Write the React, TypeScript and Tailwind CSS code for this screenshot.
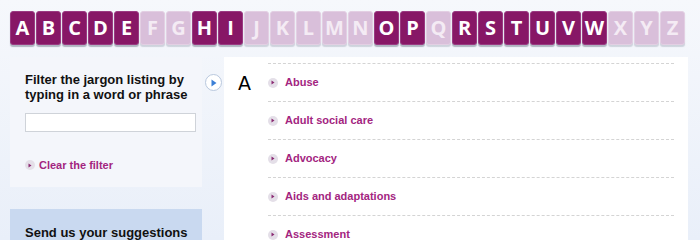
const letters = 'ABCDEFGHIJKLMNOPQRSTUVWXYZ'.split('');
const active = new Set(['A', 'B', 'C', 'D', 'E', 'H', 'I', 'O', 'P', 'R', 'S', 'T', 'U', 'V', 'W']);

const terms = ['Abuse', 'Adult social care', 'Advocacy', 'Aids and adaptations', 'Assessment'];

function Bullet() {
  return (
    <span className="flex h-[10px] w-[10px] shrink-0 items-center justify-center rounded-full bg-[#e4dfe8]">
      <svg width="4" height="5" viewBox="0 0 4 5">
        <path d="M0.5 0.5 L3.5 2.5 L0.5 4.5 Z" fill="#8a2a72" />
      </svg>
    </span>
  );
}

export default function App() {
  return (
    <div className="h-[240px] w-[700px] overflow-hidden bg-gradient-to-b from-[#f6f8fc] to-[#e9eff9] font-['Liberation_Sans',Arial,sans-serif]">
      {/* letter tabs */}
      <div className="flex gap-px pl-[10px] pt-[11px]">
        {letters.map((l) => (
          <div
            key={l}
            className={
              active.has(l)
                ? "flex h-[34px] w-[25px] items-center justify-center rounded-[3px] border border-[#9a3a82] bg-[#871766] font-['Open_Sans',sans-serif] text-[20px] font-bold text-white shadow-[0_2px_1px_rgba(90,100,120,0.45)]"
                : "flex h-[34px] w-[25px] items-center justify-center rounded-[3px] border border-[#e3cfe3] bg-[#d9bfda] font-['Open_Sans',sans-serif] text-[20px] font-bold text-[#f4ebf4] shadow-[0_2px_1px_rgba(120,130,150,0.3)]"
            }
          >
            {l}
          </div>
        ))}
      </div>

      <div className="mt-[12px] flex">
        {/* left column */}
        <div className="ml-[10px] w-[192px] shrink-0">
          <div className="h-[130px] bg-[#f4f6fb] pl-[15px] pr-[4px] pt-[15px]">
            <h2 className="whitespace-nowrap text-[13px] font-bold leading-[15px] text-[#111]">
              Filter the jargon listing by
              <br />
              typing in a word or phrase
            </h2>
            <input
              type="text"
              className="mt-[11px] block h-[19px] w-[171px] border border-[#cfd3d9] bg-white outline-none"
            />
            <a className="mt-[25px] flex items-center gap-[4px] text-[11px] font-bold text-[#a3257f]">
              <Bullet />
              Clear the filter
            </a>
          </div>
          <div className="mt-[22px] h-[60px] bg-[#c9d9f0] pl-[15px] pr-[4px] pt-[16px]">
            <h2 className="whitespace-nowrap text-[13px] font-bold leading-[15px] text-[#111]">
              Send us your suggestions
            </h2>
          </div>
        </div>

        {/* toggle */}
        <div className="w-[22px] shrink-0 pl-[3px] pt-[17px]">
          <span className="flex h-[17px] w-[17px] items-center justify-center rounded-full border border-[#b9c8de] bg-white">
            <svg width="6" height="8" viewBox="0 0 6 8" className="ml-[1px]">
              <path d="M0.5 0.5 L5.5 4 L0.5 7.5 Z" fill="#3b7fd6" />
            </svg>
          </span>
        </div>

        {/* listing */}
        <div className="h-[200px] w-[464px] shrink-0 bg-white pl-[14px] pt-[6px]">
          <div className="flex">
            <div className="w-[30px] shrink-0 pt-[10px] font-['DejaVu_Sans',sans-serif] text-[19px] leading-[20px] text-black">
              A
            </div>
            <ul className="w-[406px]">
              {terms.map((t) => (
                <li key={t} className="flex h-[38px] items-center gap-[7px] border-t border-dashed border-[#d4d4d4] text-[11px] font-bold text-[#a3257f]">
                  <Bullet />
                  {t}
                </li>
              ))}
            </ul>
          </div>
        </div>
      </div>
    </div>
  );
}
